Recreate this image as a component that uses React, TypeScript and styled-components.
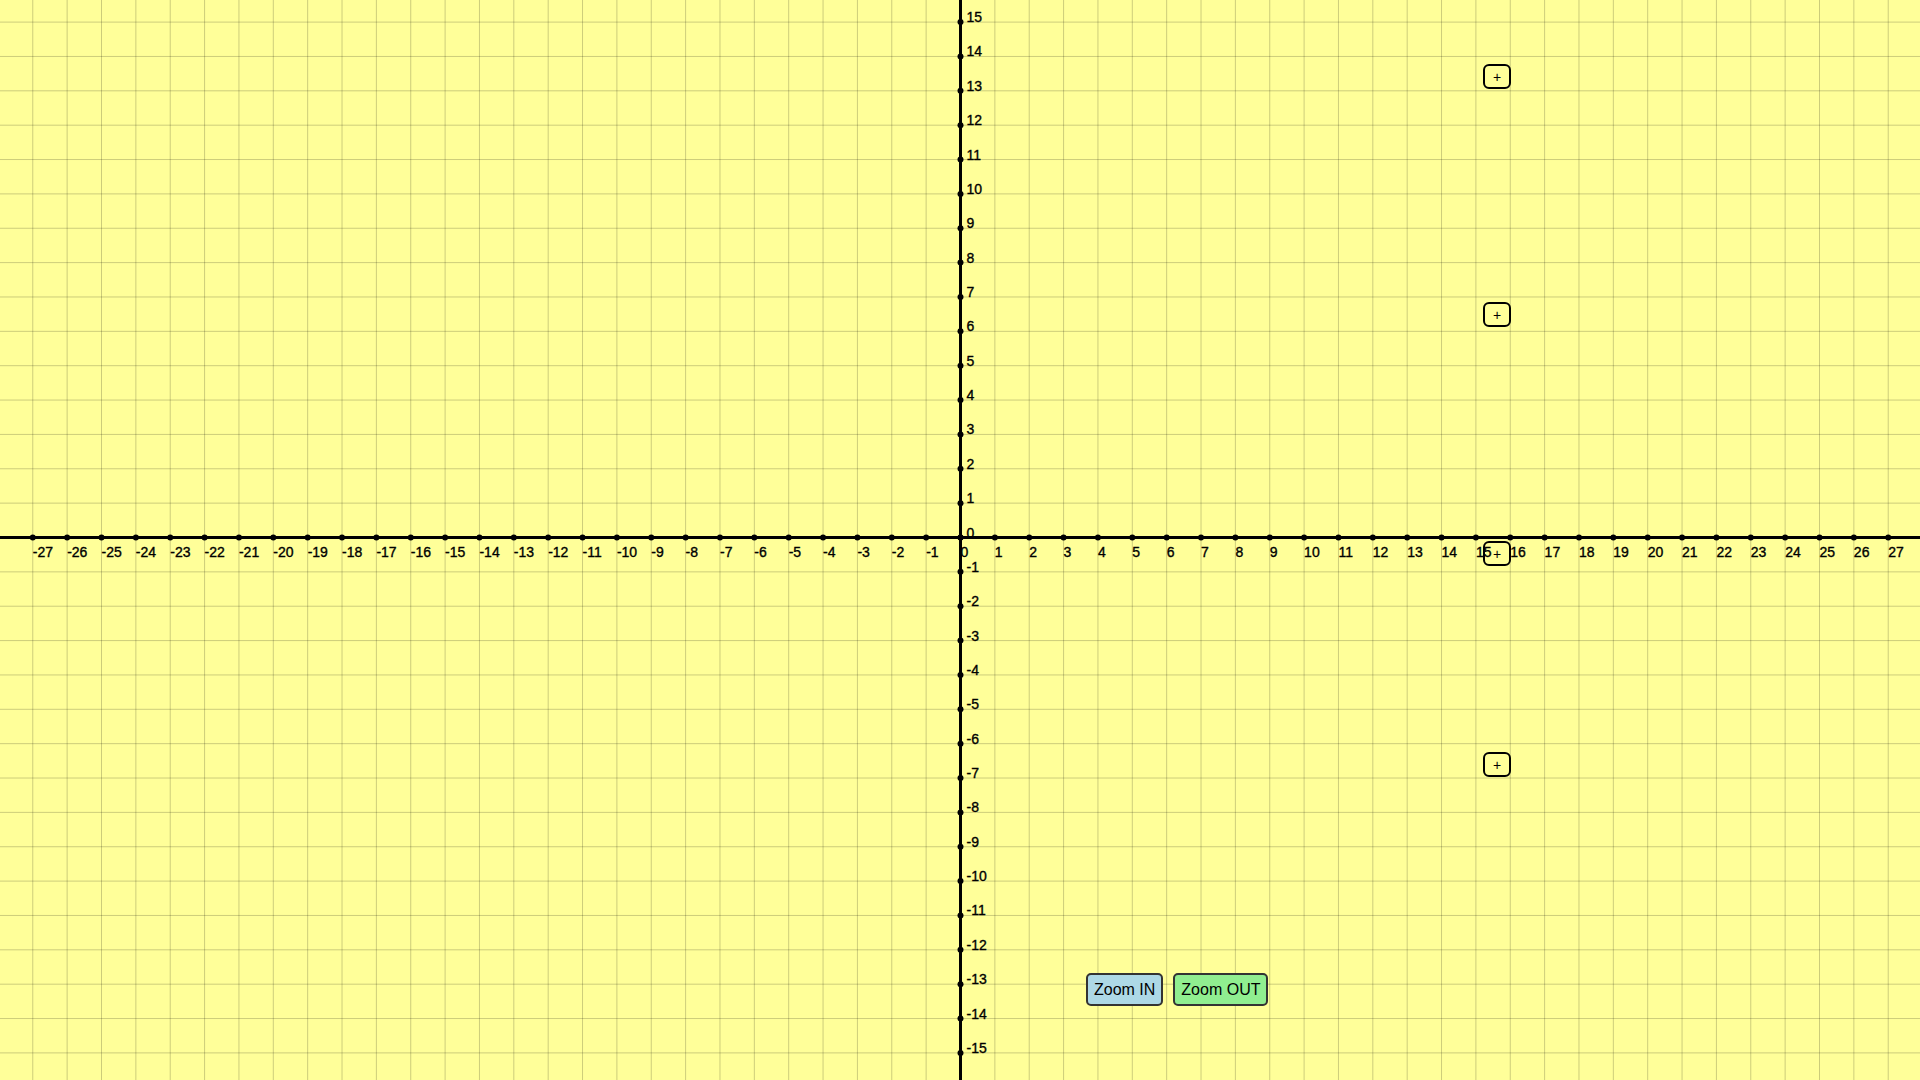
import React from "react";
import styled, { createGlobalStyle } from "styled-components";

const GlobalStyle = createGlobalStyle`
  html, body { margin: 0; padding: 0; background: #ffff99; }
  body { font-family: "Liberation Sans", Arial, sans-serif; overflow: hidden; }
`;

const W = 1920;
const H = 1080;
const OX = 960.5;
const OY = 537.5;
const S = 34.36;

const Stage = styled.div`
  position: relative;
  width: ${W}px;
  height: ${H}px;
  background: #ffff99;
  overflow: hidden;
`;

const Plane = styled.svg`
  display: block;
  width: ${W}px;
  height: ${H}px;
`;

const GridLine = styled.line`
  stroke: rgba(0, 0, 0, 0.2);
  stroke-width: 1;
`;

const Axis = styled.line`
  stroke: #000;
  stroke-width: 3;
`;

const Tick = styled.circle`
  fill: #000;
`;

const Label = styled.text`
  font-family: "Liberation Sans", Arial, sans-serif;
  font-size: 14px;
  fill: #000;
  stroke: #000;
  stroke-width: 0.35px;
`;

const PlusButton = styled.button<{ $top: number }>`
  position: absolute;
  left: 1483px;
  top: ${(p) => p.$top}px;
  width: 28px;
  height: 25px;
  box-sizing: border-box;
  padding: 0;
  border: 2.5px solid #000;
  border-radius: 6px;
  background: transparent;
  font-family: "Liberation Sans", Arial, sans-serif;
  font-size: 14px;
  line-height: 1;
  color: #000;
  display: flex;
  align-items: center;
  justify-content: center;
  cursor: pointer;
`;

const ZoomBar = styled.div`
  position: absolute;
  left: 1086px;
  top: 973px;
  display: flex;
  gap: 10px;
`;

const ZoomButton = styled.button<{ $bg: string }>`
  height: 33px;
  box-sizing: border-box;
  padding: 0 6px;
  border: 2px solid #333;
  border-radius: 5px;
  background: ${(p) => p.$bg};
  font-family: "Liberation Sans", Arial, sans-serif;
  font-size: 16px;
  color: #000;
  cursor: pointer;
`;

const xs: number[] = [];
for (let i = -27; i <= 27; i++) xs.push(i);
const ys: number[] = [];
for (let i = -15; i <= 15; i++) ys.push(i);

const plusTops = [64, 302, 541, 752];

export default function App() {
  return (
    <>
      <GlobalStyle />
      <Stage>
        <Plane viewBox={`0 0 ${W} ${H}`}>
          {xs.map((i) => (
            <GridLine key={`gx${i}`} x1={OX + i * S} x2={OX + i * S} y1={0} y2={H} />
          ))}
          {ys.map((i) => (
            <GridLine key={`gy${i}`} x1={0} x2={W} y1={OY - i * S} y2={OY - i * S} />
          ))}
          <Axis x1={0} x2={W} y1={OY} y2={OY} />
          <Axis x1={OX} x2={OX} y1={0} y2={H} />
          {xs.map((i) => (
            <g key={`tx${i}`}>
              <Tick cx={OX + i * S} cy={OY} r={3} />
              <Label x={OX + i * S} y={OY + 19}>
                {i}
              </Label>
            </g>
          ))}
          {ys.map((i) => (
            <g key={`ty${i}`}>
              <Tick cx={OX} cy={OY - i * S} r={3} />
              <Label x={OX + 6} y={OY - i * S}>
                {i}
              </Label>
            </g>
          ))}
        </Plane>
        {plusTops.map((t) => (
          <PlusButton key={t} $top={t}>
            +
          </PlusButton>
        ))}
        <ZoomBar>
          <ZoomButton $bg="#add8e6">Zoom IN</ZoomButton>
          <ZoomButton $bg="#90ee90">Zoom OUT</ZoomButton>
        </ZoomBar>
      </Stage>
    </>
  );
}
